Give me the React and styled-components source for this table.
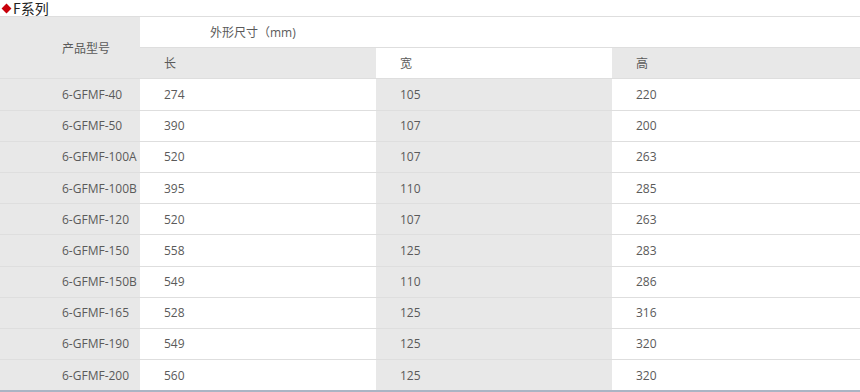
import styled, { createGlobalStyle } from "styled-components";

const GlobalStyle = createGlobalStyle`
  html, body {
    margin: 0;
    padding: 0;
    background: #fff;
  }
  body {
    font-family: "Open Sans", "Noto Sans CJK SC", sans-serif;
    color: #5a5a5a;
  }
`

const Page = styled.div`
  width: 860px;
  height: 392px;
  overflow: hidden;
  border-bottom: 2px solid #aab4c4;
  box-sizing: border-box;
`

const Title = styled.h3`
  margin: 0;
  height: 16px;
  display: flex;
  align-items: center;
  font-family: "Noto Sans CJK SC", sans-serif;
  font-weight: normal;
  font-size: 14px;
  line-height: 16px;
  color: #222;

  .diamond {
    display: inline-block;
    width: 7px;
    height: 7px;
    margin: 0 3px 0 3px;
    background: #c8000a;
    transform: rotate(45deg);
  }
`

const Table = styled.table`
  width: 860px;
  border-collapse: collapse;
  table-layout: fixed;
  font-size: 12px;

  tr {
    height: 31.2px;
  }

  td {
    padding: 0 0 0 24px;
    border-top: 1px solid #dedede;
    white-space: nowrap;
  }
`

const Cell = styled.td`
  && {
    background: ${p => (p.$gray ? "#e8e8e8" : "#fff")};
    padding-left: ${p => p.$indent || 24}px;
  }
`

const rows = [
  ["6-GFMF-40", "274", "105", "220"],
  ["6-GFMF-50", "390", "107", "200"],
  ["6-GFMF-100A", "520", "107", "263"],
  ["6-GFMF-100B", "395", "110", "285"],
  ["6-GFMF-120", "520", "107", "263"],
  ["6-GFMF-150", "558", "125", "283"],
  ["6-GFMF-150B", "549", "110", "286"],
  ["6-GFMF-165", "528", "125", "316"],
  ["6-GFMF-190", "549", "125", "320"],
  ["6-GFMF-200", "560", "125", "320"],
]

export default function App() {
  return (
    <Page>
      <GlobalStyle />
      <Title>
        <span className="diamond" />F系列
      </Title>
      <Table>
        <colgroup>
          <col style={{ width: 140 }} />
          <col style={{ width: 236 }} />
          <col style={{ width: 236 }} />
          <col style={{ width: 248 }} />
        </colgroup>
        <tbody>
          <tr>
            <Cell $gray rowSpan={2} $indent={62}>产品型号</Cell>
            <Cell colSpan={3} $indent={70}>外形尺寸（mm)</Cell>
          </tr>
          <tr>
            <Cell $gray>长</Cell>
            <Cell>宽</Cell>
            <Cell $gray>高</Cell>
          </tr>
          {rows.map(r => (
            <tr key={r[0]}>
              <Cell $gray $indent={62}>{r[0]}</Cell>
              <Cell>{r[1]}</Cell>
              <Cell $gray>{r[2]}</Cell>
              <Cell>{r[3]}</Cell>
            </tr>
          ))}
        </tbody>
      </Table>
    </Page>
  )
}
